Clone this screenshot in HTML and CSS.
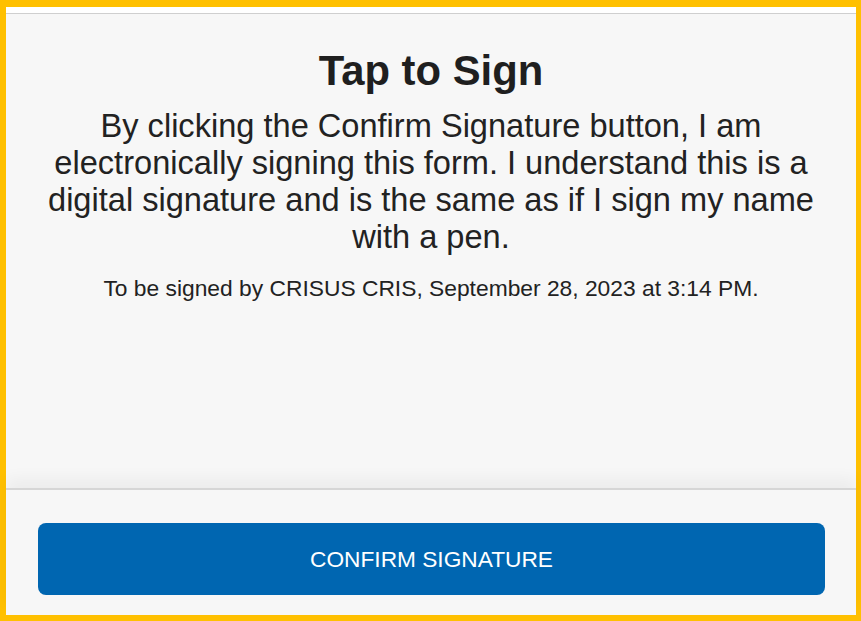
FILE: index.html
```html
<!DOCTYPE html>
<html lang="en">
<head>
<meta charset="utf-8">
<title>Tap to Sign</title>
<link rel="stylesheet" href="styles.css">
</head>
<body>
<div class="frame">
  <div class="topbar"></div>
  <main class="content">
    <h1 class="title">Tap to Sign</h1>
    <p class="statement">By clicking the Confirm Signature button, I am electronically signing this form. I understand this is a digital signature and is the same as if I sign my name with a pen.</p>
    <p class="signer">To be signed by CRISUS CRIS, September 28, 2023 at 3:14 PM.</p>
  </main>
  <footer class="footer">
    <button class="confirm" type="button">CONFIRM SIGNATURE</button>
  </footer>
</div>
</body>
</html>
```
FILE: styles.css
```css
* { box-sizing: border-box; }
html, body { margin: 0; padding: 0; }
body {
  font-family: "Liberation Sans", Arial, sans-serif;
  color: #222222;
  background: #ffffff;
}
.frame {
  width: 861px;
  height: 621px;
  border-style: solid;
  border-color: #ffc000;
  border-width: 7px 5px 6px 6px;
  display: flex;
  flex-direction: column;
  background: #f7f7f7;
}
.topbar {
  height: 7px;
  background: #ffffff;
  border-bottom: 1px solid #cfcfcf;
  flex: none;
}
.content {
  flex: 1;
  text-align: center;
  padding: 33px 30px 0;
}
.title {
  margin: 0;
  font-size: 41.8px;
  line-height: 48px;
  font-weight: 700;
  color: #1f1f1f;
}
.statement {
  margin: 12px 0 0;
  font-size: 32.6px;
  line-height: 37px;
}
.signer {
  margin: 20px 0 0;
  font-size: 22.8px;
  line-height: 26px;
}
.footer {
  flex: none;
  border-top: 2px solid #d6d6d6;
  box-shadow: 0 -10px 14px rgba(0, 0, 0, 0.045);
  padding: 33px 31px 20px 32px;
  background: #f7f7f7;
}
.confirm {
  display: block;
  width: 100%;
  height: 72px;
  border: none;
  border-radius: 8px;
  background: #0066b1;
  color: #ffffff;
  font-family: "Liberation Sans", Arial, sans-serif;
  font-size: 22.7px;
  letter-spacing: 0;
  cursor: pointer;
}
```
